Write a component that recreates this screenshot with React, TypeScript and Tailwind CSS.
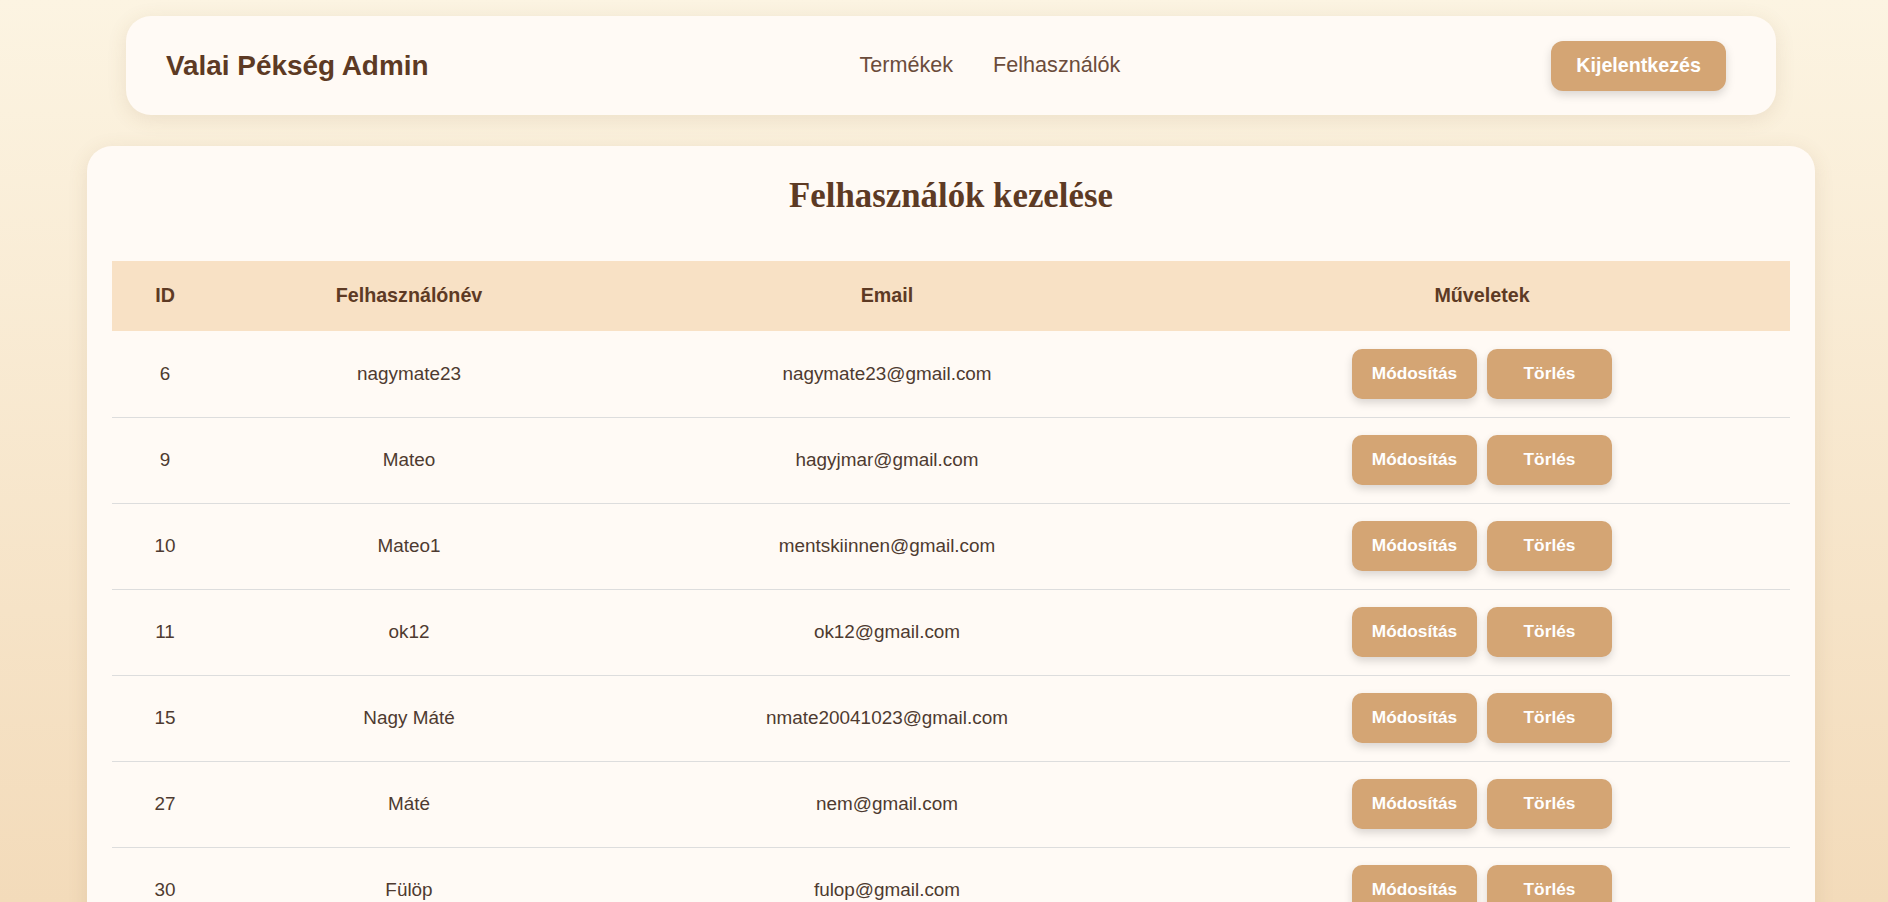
import React from "react";

const users = [
  { id: 6, name: "nagymate23", email: "nagymate23@gmail.com" },
  { id: 9, name: "Mateo", email: "hagyjmar@gmail.com" },
  { id: 10, name: "Mateo1", email: "mentskiinnen@gmail.com" },
  { id: 11, name: "ok12", email: "ok12@gmail.com" },
  { id: 15, name: "Nagy Máté", email: "nmate20041023@gmail.com" },
  { id: 27, name: "Máté", email: "nem@gmail.com" },
  { id: 30, name: "Fülöp", email: "fulop@gmail.com" },
];

export default function App() {
  return (
    <div className="h-[902px] overflow-hidden bg-linear-to-b from-[#fcf4e2] to-[#f3dbba] font-['Liberation_Sans',Arial,sans-serif] text-[#5d4037]">
      <div className="h-[16px]" />
      <nav className="ml-[126px] w-[1650px] h-[99px] rounded-[25px] bg-[#fffaf5] shadow-[0_4px_20px_rgba(120,90,50,0.12)] flex items-center justify-between pl-[40px] pr-[50px]">
        <div className="text-[27.9px] font-bold text-[#5d3a24]">Valai Pékség Admin</div>
        <div className="flex items-center gap-[40px] text-[21.6px] text-[#6b4c3b]">
          <span>Termékek</span>
          <span>Felhasználók</span>
        </div>
        <button className="h-[50px] px-[25px] rounded-[12px] bg-[#d4a574] text-white font-bold text-[19.7px] shadow-[0_4px_10px_rgba(0,0,0,0.15)]">
          Kijelentkezés
        </button>
      </nav>
      <main className="ml-[87px] mt-[31px] w-[1728px] rounded-[25px] bg-[#fffaf5] shadow-[0_4px_20px_rgba(120,90,50,0.12)] px-[25px] pt-[30px] pb-[30px]">
        <h1 className="text-center font-['Liberation_Serif','Times_New_Roman',serif] font-bold text-[34.8px] leading-[40px] text-[#5d3a24] mb-[45px]">
          Felhasználók kezelése
        </h1>
        <table className="w-[1678px] border-collapse table-fixed">
          <colgroup>
            <col className="w-[106px]" />
            <col className="w-[382px]" />
            <col className="w-[574px]" />
            <col className="w-[616px]" />
          </colgroup>
          <thead>
            <tr className="h-[70px] bg-[#f8e1c5] text-[19.7px] font-bold text-[#5d3a24]">
              <th className="font-bold">ID</th>
              <th className="font-bold">Felhasználónév</th>
              <th className="font-bold">Email</th>
              <th className="font-bold">Műveletek</th>
            </tr>
          </thead>
          <tbody>
            {users.map((u) => (
              <tr key={u.id} className="h-[86px] border-b border-[#dddddd] text-[18.9px] text-[#4e3a30]">
                <td className="text-center">{u.id}</td>
                <td className="text-center">{u.name}</td>
                <td className="text-center">{u.email}</td>
                <td className="text-center">
                  <div className="flex justify-center gap-[10px]">
                    <button className="w-[125px] h-[50px] rounded-[10px] bg-[#d4a574] text-white font-bold text-[17.28px] shadow-[0_4px_8px_rgba(0,0,0,0.15)]">
                      Módosítás
                    </button>
                    <button className="w-[125px] h-[50px] rounded-[10px] bg-[#d4a574] text-white font-bold text-[17.28px] shadow-[0_4px_8px_rgba(0,0,0,0.15)]">
                      Törlés
                    </button>
                  </div>
                </td>
              </tr>
            ))}
          </tbody>
        </table>
      </main>
    </div>
  );
}
